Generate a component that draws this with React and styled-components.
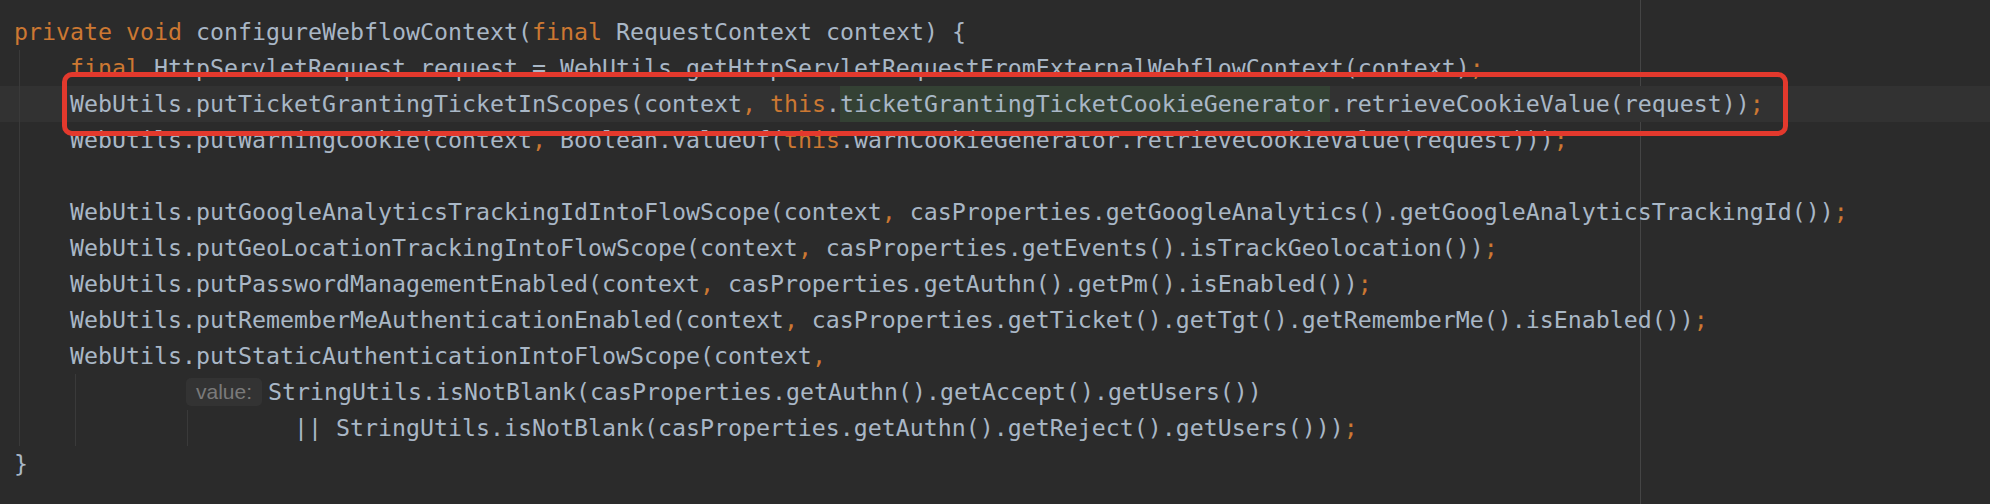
import React from "react";
import styled, { createGlobalStyle } from "styled-components";

const GlobalStyle = createGlobalStyle`
  html, body { margin: 0; padding: 0; background: #2b2b2b; }
  #root { width: 1990px; height: 504px; }
`;

const CW = 14; // character cell width in px
const PAD = 14;

const Editor = styled.div`
  position: relative;
  width: 1990px;
  height: 504px;
  box-sizing: border-box;
  padding-top: 14px;
  overflow: hidden;
  background: #2b2b2b;
  color: #a9b7c6;
  font-family: "DejaVu Sans Mono", "Liberation Mono", monospace;
  font-size: 23.25px;
  line-height: 36px;
`;

const RightMargin = styled.div`
  position: absolute;
  top: 0;
  bottom: 0;
  left: 1640px;
  width: 1px;
  background: #454545;
`;

const Line = styled.div`
  position: relative;
  height: 36px;
  padding-left: ${PAD}px;
  white-space: pre;
  background: ${(p) => (p.$current ? "#323232" : "transparent")};
`;

const Guide = styled.span`
  position: absolute;
  top: 0;
  bottom: 0;
  left: ${(p) => PAD + p.$col * CW + 5}px;
  width: 1px;
  background: #3a3a3a;
`;

const Keyword = styled.span`
  color: #cc7832;
`;

const Mark = styled.span`
  display: inline-block;
  vertical-align: top;
  height: 36px;
  background: #344134;
`;

const Hint = styled.span`
  display: inline-block;
  vertical-align: top;
  box-sizing: border-box;
  height: 28px;
  margin: 4px 6px 0 4px;
  padding: 0 10px;
  border-radius: 5px;
  background: #333333;
  color: #7a7a7a;
  font-family: "Liberation Sans", Arial, sans-serif;
  font-size: 21px;
  line-height: 28px;
`;

const Callout = styled.div`
  position: absolute;
  left: 62px;
  top: 72px;
  width: 1726px;
  height: 64px;
  box-sizing: border-box;
  border: 5px solid #e3392d;
  border-radius: 10px;
  pointer-events: none;
`;

const k = (t) => ["k", t];
const m = (t) => ["m", t];
const h = (t) => ["h", t];

const lines = [
  { tokens: [k("private"), " ", k("void"), " configureWebflowContext(", k("final"), " RequestContext context) {"], guides: [] },
  { tokens: ["    ", k("final"), " HttpServletRequest request = WebUtils.getHttpServletRequestFromExternalWebflowContext(context)", k(";")], guides: [0] },
  {
    current: true,
    tokens: ["    WebUtils.putTicketGrantingTicketInScopes(context", k(","), " ", k("this"), ".", m("ticketGrantingTicketCookieGenerator"), ".retrieveCookieValue(request))", k(";")],
    guides: [0],
  },
  { tokens: ["    WebUtils.putWarningCookie(context", k(","), " Boolean.valueOf(", k("this"), ".warnCookieGenerator.retrieveCookieValue(request)))", k(";")], guides: [0] },
  { tokens: [""], guides: [0] },
  { tokens: ["    WebUtils.putGoogleAnalyticsTrackingIdIntoFlowScope(context", k(","), " casProperties.getGoogleAnalytics().getGoogleAnalyticsTrackingId())", k(";")], guides: [0] },
  { tokens: ["    WebUtils.putGeoLocationTrackingIntoFlowScope(context", k(","), " casProperties.getEvents().isTrackGeolocation())", k(";")], guides: [0] },
  { tokens: ["    WebUtils.putPasswordManagementEnabled(context", k(","), " casProperties.getAuthn().getPm().isEnabled())", k(";")], guides: [0] },
  { tokens: ["    WebUtils.putRememberMeAuthenticationEnabled(context", k(","), " casProperties.getTicket().getTgt().getRememberMe().isEnabled())", k(";")], guides: [0] },
  { tokens: ["    WebUtils.putStaticAuthenticationIntoFlowScope(context", k(",")], guides: [0] },
  { tokens: ["            ", h("value:"), "StringUtils.isNotBlank(casProperties.getAuthn().getAccept().getUsers())"], guides: [0, 4] },
  { tokens: ["                    || StringUtils.isNotBlank(casProperties.getAuthn().getReject().getUsers()))", k(";")], guides: [0, 4, 12] },
  { tokens: ["}"], guides: [] },
];

function Token({ token }) {
  if (typeof token === "string") return token;
  const [type, text] = token;
  if (type === "k") return <Keyword>{text}</Keyword>;
  if (type === "m") return <Mark>{text}</Mark>;
  return <Hint>{text}</Hint>;
}

export default function App() {
  return (
    <>
      <GlobalStyle />
      <Editor>
        <RightMargin />
        {lines.map((line, i) => (
          <Line key={i} $current={line.current}>
            {line.guides.map((c) => (
              <Guide key={c} $col={c} />
            ))}
            {line.tokens.map((t, j) => (
              <Token key={j} token={t} />
            ))}
          </Line>
        ))}
        <Callout />
      </Editor>
    </>
  );
}
